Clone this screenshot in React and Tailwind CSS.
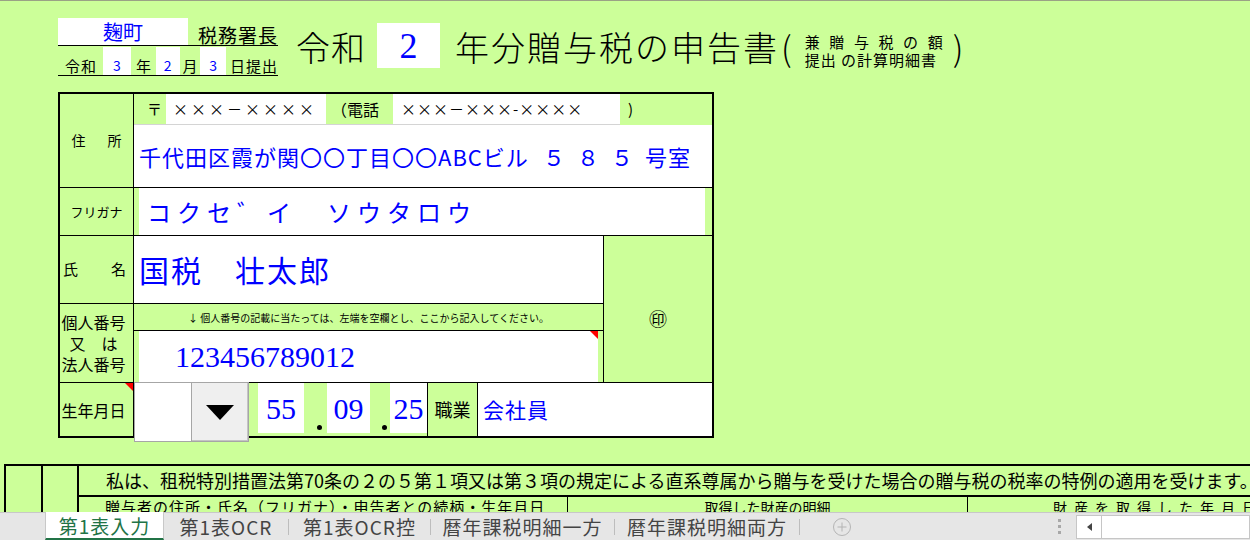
import React from "react";

const RedMark = () => (
  <span className="absolute top-0 right-0 w-0 h-0 border-t-[8px] border-t-[#ff0000] border-l-[8px] border-l-transparent" />
);

const Label = ({ children, className = "" }) => (
  <div className={`w-[74px] shrink-0 border-r border-black flex items-center ${className}`}>{children}</div>
);

const Header = () => (
  <div className="h-[91px] shrink-0 flex items-start pl-[58px]">
    {/* 税務署 / 提出日 */}
    <div className="w-[220px] mt-[17px]">
      <div className="h-[28px] border-b border-black flex items-end">
        <div className="w-[136px] h-[27px] bg-white flex items-center justify-center text-[20px] leading-none text-[#0000ff]">麹町</div>
        <span className="ml-[10px] mb-[1px] text-[19px] leading-none tracking-[1px] whitespace-nowrap">税務署長</span>
      </div>
      <div className="h-[30px] border-b border-black flex items-end text-[15px] leading-none">
        <span className="w-[45px] pl-[7px] pb-[2px] tracking-[1px]">令和</span>
        <span className="w-[29px] h-[28px] bg-white flex items-end justify-center pb-[3px] text-[14px] text-[#0000ff]">3</span>
        <span className="w-[25px] pb-[2px] text-center">年</span>
        <span className="w-[24px] h-[28px] bg-white flex items-end justify-center pb-[3px] text-[14px] text-[#0000ff]">2</span>
        <span className="w-[21px] pb-[2px] text-center">月</span>
        <span className="w-[26px] h-[28px] bg-white flex items-end justify-center pb-[3px] text-[14px] text-[#0000ff]">3</span>
        <span className="pl-[4px] pb-[2px] tracking-[1px] whitespace-nowrap">日提出</span>
      </div>
    </div>

    {/* タイトル */}
    <span className="ml-[18px] mt-[29px] text-[34px] leading-none tracking-[1px] font-light whitespace-nowrap">令和</span>
    <div className="ml-[11px] mt-[22px] w-[63px] h-[45px] bg-white flex items-center justify-center font-['Liberation_Serif',serif] text-[36px] leading-none text-[#0000ff]">2</div>
    <span className="ml-[15px] mt-[29px] text-[34px] leading-none tracking-[2px] font-light whitespace-nowrap">年分贈与税の申告書</span>
    <span className="ml-[2px] mt-[29px] text-[34px] leading-none font-light">(</span>
    <div className="ml-[13px] mt-[32px] w-[138px] text-[15px] leading-[17px]">
      <div className="flex justify-between">
        <span>兼</span>
        <span>贈</span>
        <span>与</span>
        <span>税</span>
        <span>の</span>
        <span>額</span>
      </div>
      <div className="mt-[1px] whitespace-nowrap tracking-[1px]">提出 の計算明細書</div>
    </div>
    <span className="ml-[10px] mt-[29px] text-[34px] leading-none font-light">)</span>
  </div>
);

const PersonTable = () => (
  <div className="ml-[58px] w-[656px] h-[346px] shrink-0 border-2 border-black flex flex-col">
    {/* 住所 */}
    <div className="h-[94px] shrink-0 flex border-b border-black">
      <Label className="justify-center gap-[22px] text-[14px]">
        <span>住</span>
        <span>所</span>
      </Label>
      <div className="flex-1 flex flex-col">
        <div className="h-[31px] shrink-0 flex text-[15px] whitespace-nowrap">
          <div className="w-[32px] border-b border-[#d4d4d4] pl-[13px] flex items-center">〒</div>
          <div className="w-[160px] bg-white border-b border-[#d4d4d4] pl-[7px] flex items-center tracking-[3px]">×××－××××</div>
          <div className="w-[67px] border-b border-[#d4d4d4] pl-[5px] flex items-center text-[16px]">（電話</div>
          <div className="w-[227px] bg-white border-b border-[#d4d4d4] pl-[8px] flex items-center tracking-[1px]">×××－×××-××××</div>
          <div className="flex-1 pl-[8px] flex items-center">)</div>
        </div>
        <div className="flex-1 bg-white pl-[5px] flex items-center text-[22px] tracking-[1px] text-[#0000ff] whitespace-nowrap">
          千代田区霞が関〇〇丁目〇〇ABCビル<span className="ml-[14px] tracking-[12px]">５８５</span>号室
        </div>
      </div>
    </div>

    {/* フリガナ */}
    <div className="h-[48px] shrink-0 flex border-b border-black">
      <Label className="justify-center text-[13px]">フリガナ</Label>
      <div className="flex-1 pl-[5px] pr-[7px] flex">
        <div className="flex-1 bg-white pl-[8px] flex items-center text-[24px] tracking-[6px] text-[#0000ff] whitespace-nowrap">コクセ゛イ　ソウタロウ</div>
      </div>
    </div>

    {/* 氏名・個人番号・印 */}
    <div className="h-[147px] shrink-0 flex border-b border-black">
      <div className="w-[543px] flex flex-col">
        <div className="h-[68px] shrink-0 flex border-b border-black">
          <Label className="justify-between pl-[3px] pr-[7px] text-[15px]">
            <span>氏</span>
            <span>名</span>
          </Label>
          <div className="flex-1 bg-white pl-[5px] flex items-center text-[30px] tracking-[2px] text-[#0000ff] whitespace-nowrap">国税　壮太郎</div>
        </div>
        <div className="flex-1 flex">
          <Label className="justify-center pr-[6px] text-center text-[16px] leading-[21px]">
            <div>
              個人番号
              <br />
              又　は
              <br />
              法人番号
            </div>
          </Label>
          <div className="flex-1 flex flex-col">
            <div className="h-[27px] shrink-0 border-b border-black flex items-center justify-center text-[10px] whitespace-nowrap">
              ↓ 個人番号の記載に当たっては、左端を空欄とし、ここから記入してください。
            </div>
            <div className="flex-1 px-[5px] flex">
              <div className="relative flex-1 bg-white pl-[36px] flex items-center font-['Liberation_Serif',serif] text-[30px] text-[#0000ff]">
                123456789012
                <RedMark />
              </div>
            </div>
          </div>
        </div>
      </div>
      <div className="flex-1 border-l border-black flex items-center justify-center pt-[18px] text-[18px]">㊞</div>
    </div>

    {/* 生年月日・職業 */}
    <div className="h-[53px] shrink-0 flex items-start">
      <Label className="relative self-stretch justify-center pr-[6px] text-[16px]">
        生年月日
        <RedMark />
      </Label>
      <div className="relative z-10 -mt-px w-[115px] h-[60px] shrink-0 flex bg-white border border-[#a6a6a6]">
        <div className="w-[56px]" />
        <div className="flex-1 bg-[#efefef] border-l border-[#a6a6a6] flex items-center justify-center shadow-[inset_-1px_-1px_0_#c4c4c4]">
          <span className="w-0 h-0 border-l-[14px] border-r-[14px] border-t-[15px] border-l-transparent border-r-transparent border-t-black" />
        </div>
      </div>
      <div className="w-[9px] shrink-0" />
      <div className="w-[46px] h-[50px] shrink-0 bg-white flex items-center justify-center font-['Liberation_Serif',serif] text-[30px] text-[#0000ff]">55</div>
      <div className="w-[23px] shrink-0 flex justify-end pr-[5px] pt-[42px]">
        <span className="w-[5px] h-[5px] rounded-full bg-black" />
      </div>
      <div className="w-[43px] h-[50px] shrink-0 bg-white flex items-center justify-center font-['Liberation_Serif',serif] text-[30px] text-[#0000ff]">09</div>
      <div className="w-[20px] shrink-0 flex justify-end pr-[3px] pt-[42px]">
        <span className="w-[5px] h-[5px] rounded-full bg-black" />
      </div>
      <div className="w-[37px] h-[50px] shrink-0 bg-white flex items-center justify-center font-['Liberation_Serif',serif] text-[30px] text-[#0000ff]">25</div>
      <div className="w-[50px] self-stretch shrink-0 border-l border-black flex items-center justify-center text-[18px]">職業</div>
      <div className="flex-1 self-stretch border-l border-black bg-white pl-[5px] flex items-center text-[21px] tracking-[1px] text-[#0000ff]">会社員</div>
    </div>
  </div>
);

const ApplySection = () => (
  <div className="mt-[26px] ml-[4px] h-[48px] shrink-0 flex border-t-2 border-black overflow-hidden">
    <div className="w-[37px] shrink-0 border-l-2 border-black" />
    <div className="w-[36px] shrink-0 border-l-2 border-black" />
    <div className="flex-1 border-l-2 border-black flex flex-col">
      <div className="h-[31px] shrink-0 border-b-2 border-black pl-[27px] text-[18px] leading-[29px] whitespace-nowrap">
        私は、租税特別措置法第70条の２の５第１項又は第３項の規定による直系尊属から贈与を受けた場合の贈与税の税率の特例の適用を受けます。
      </div>
      <div className="flex-1 flex whitespace-nowrap">
        <div className="w-[489px] shrink-0 border-r border-black pl-[26px] text-[15px] tracking-[1px] leading-[20px]">
          贈与者の住所・氏名（フリガナ）・申告者との続柄・生年月日
        </div>
        <div className="w-[400px] shrink-0 border-r border-black text-center text-[14px] leading-[20px]">取得した財産の明細</div>
        <div className="flex-1 pl-[85px] text-[14px] tracking-[7px] leading-[20px]">財産を取得した年月日</div>
      </div>
    </div>
  </div>
);

const tabs = [
  { name: "第1表OCR", w: "w-[124px]" },
  { name: "第1表OCR控", w: "w-[141px]" },
  { name: "暦年課税明細一方", w: "w-[183px]" },
  { name: "暦年課税明細両方", w: "w-[184px]" },
];

const SheetTabs = () => (
  <div className="h-[28px] shrink-0 bg-[#e6e6e6] border-t border-[#c8c8c8] flex items-stretch text-[19px] leading-none text-[#444444] whitespace-nowrap">
    <div className="w-[45px] shrink-0" />
    <div className="-mt-px w-[119px] shrink-0 bg-white border-x border-[#c8c8c8] border-b-2 border-b-[#217346] flex items-center justify-center tracking-[1px] text-[#217346]">
      第1表入力
    </div>
    {tabs.map((t) => (
      <React.Fragment key={t.name}>
        <div className={`${t.w} shrink-0 flex items-center justify-center tracking-[1px]`}>{t.name}</div>
        <div className="w-px h-[16px] self-center shrink-0 bg-[#bdbdbd]" />
      </React.Fragment>
    ))}
    <div className="ml-[33px] self-center">
      <svg width="18" height="18" viewBox="0 0 18 18" fill="none" stroke="#b4b4b4" strokeWidth="1">
        <circle cx="9" cy="9" r="8.5" />
        <path d="M9 4.5v9M4.5 9h9" />
      </svg>
    </div>
    <div className="ml-[207px] self-center flex flex-col gap-[3px]">
      <span className="w-[3px] h-[3px] bg-[#a8a8a8]" />
      <span className="w-[3px] h-[3px] bg-[#a8a8a8]" />
      <span className="w-[3px] h-[3px] bg-[#a8a8a8]" />
    </div>
    <div className="ml-[15px] flex-1 h-[24px] self-center bg-white border border-[#c6c6c6] flex">
      <div className="w-[25px] border-r border-[#c6c6c6] flex items-center justify-center">
        <span className="w-0 h-0 border-t-[4px] border-b-[4px] border-r-[5px] border-t-transparent border-b-transparent border-r-[#444444]" />
      </div>
    </div>
  </div>
);

export default function App() {
  return (
    <div className="w-[1250px] h-[540px] overflow-hidden bg-[#ccff99] border-t border-[#9aa285] flex flex-col font-['Noto_Sans_CJK_JP',sans-serif] text-black">
      <Header />
      <PersonTable />
      <ApplySection />
      <SheetTabs />
    </div>
  );
}
